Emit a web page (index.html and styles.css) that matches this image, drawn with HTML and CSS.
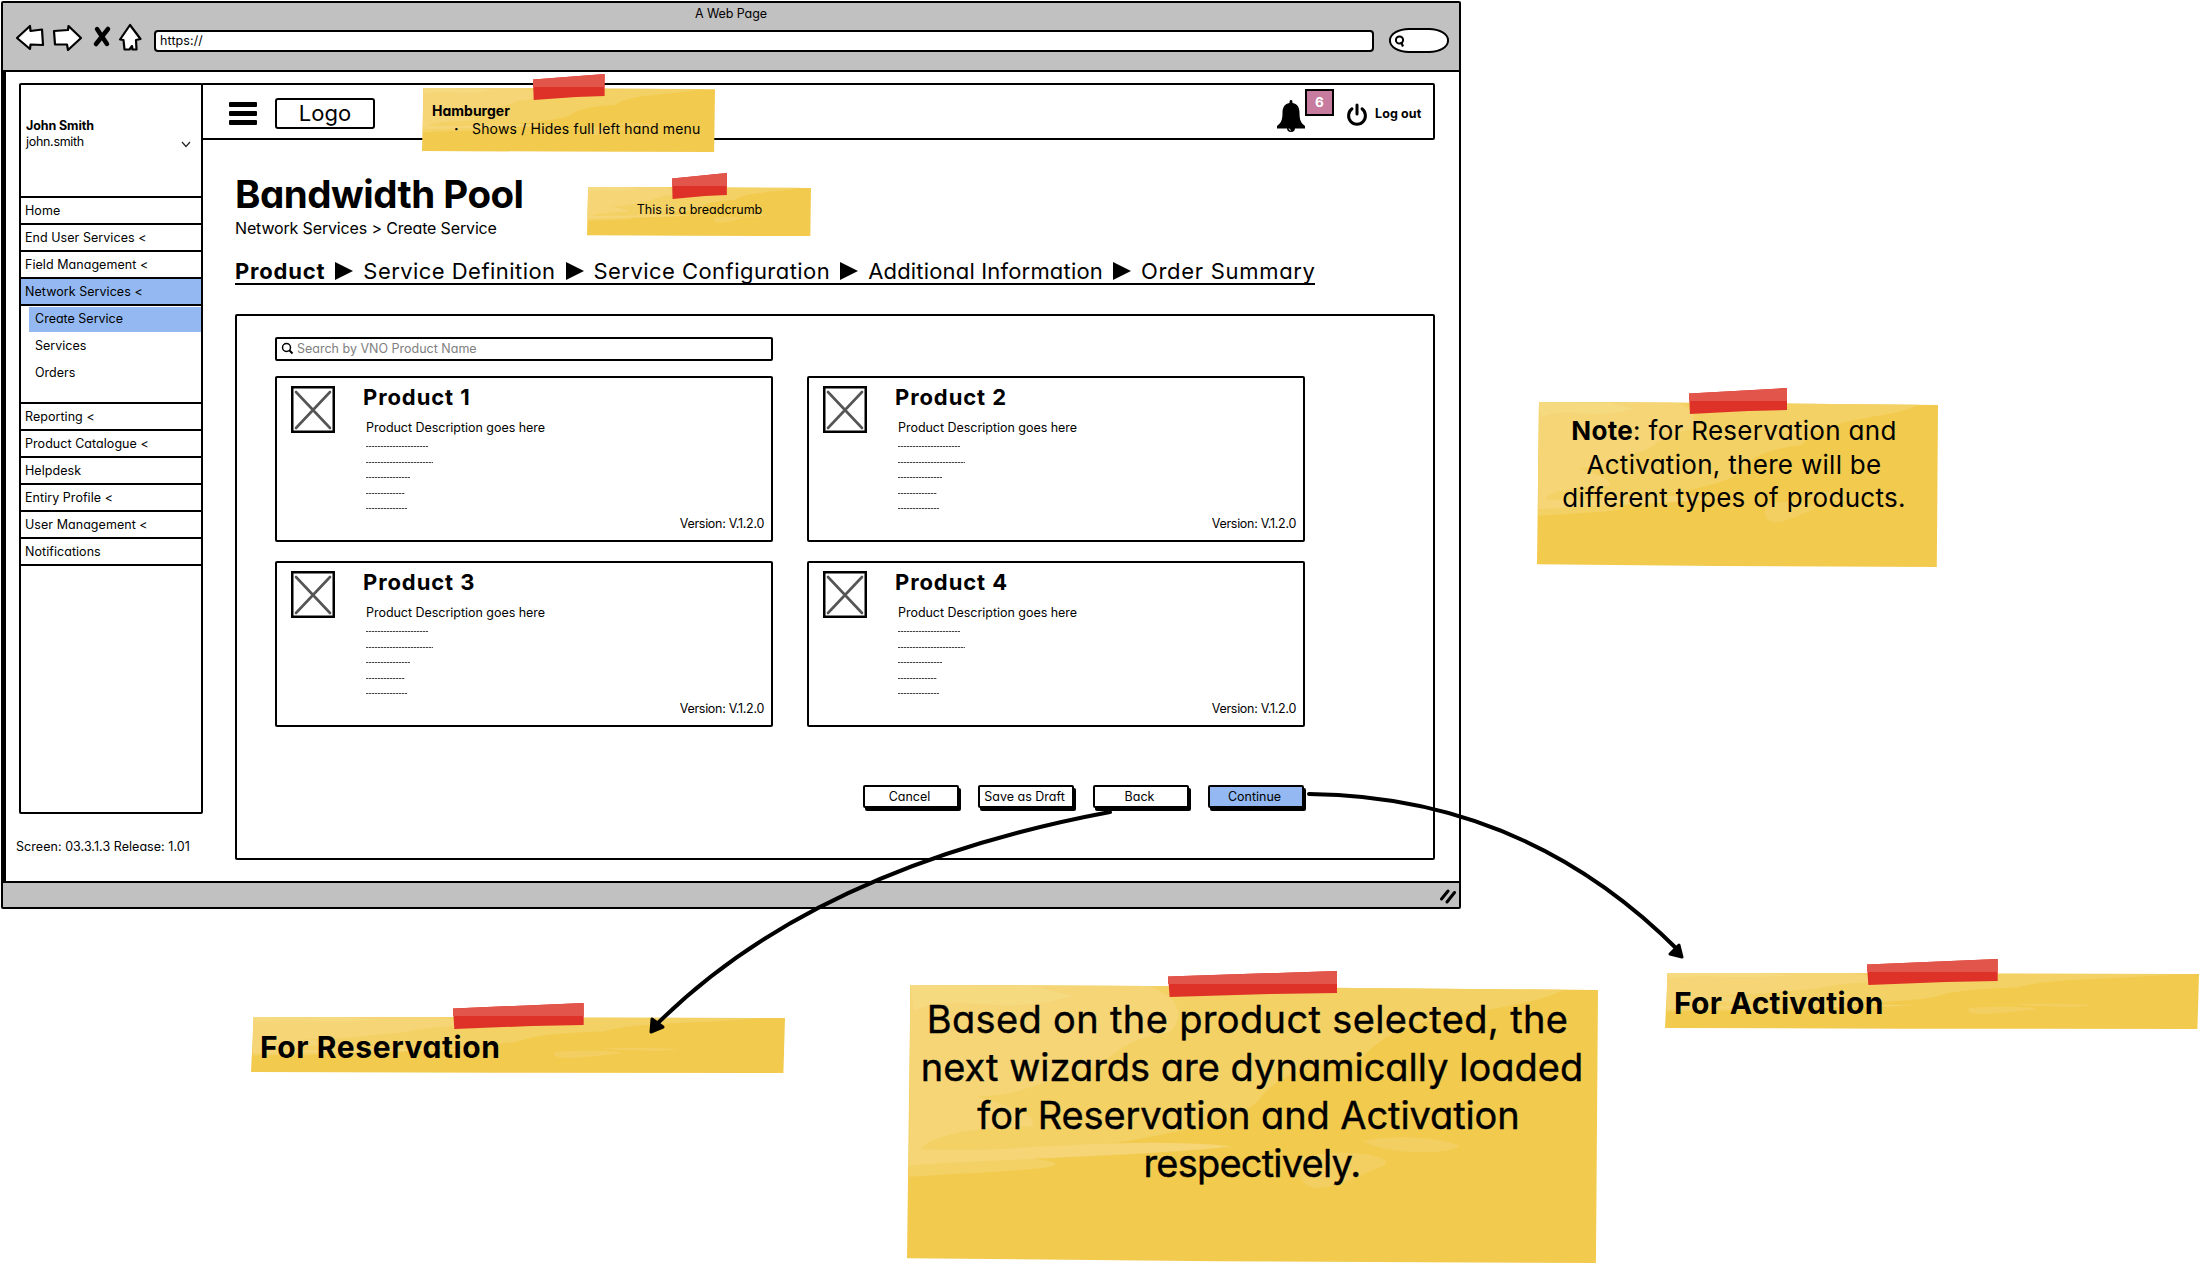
FILE: index.html
```html
<!DOCTYPE html>
<html lang="en">
<head>
    <meta charset="UTF-8">
    <title>A Web Page</title>
    <link rel="stylesheet" href="styles.css">
</head>
<body>

<!-- shared shapes -->
<svg class="defs" width="0" height="0">
    <symbol id="note" viewBox="0 0 100 100" preserveAspectRatio="none">
        <path d="M.5 0 L35 .4 L100 1.8 L99.700 100 L45 99.400 L0 98.300 Z" fill="#f2ca4d"/>
        <path d="M.5 0 L35 .4 L95 1.700 C92 6 86 8 79 11 C71 15 68 20 66 26 C56 29 53 35 51 41 C48 51 32 56 17 62 C30 66 12 67 .3 69 Z" fill="#f3d165"/>
        <path d="M.5 0 L35 .4 C40 5 40 12 38 17 C30 20 31 26 26 30 C18 36 16 40 10 40 C17 45 19 48 18 51 C8 51 3 55 2 59 C14 61 30 54 47 58 C38 61 10 63 .3 65 Z" fill="#f5d576"/>
        <path d="M1 9 C8 2 13 12 24 4 L18 .3 L.5 0 Z" fill="#f6da80"/>
        <path d="M57 62 C64 58 71 62 69 65 C65 69 62 73 59 73 C56 71 57 66 57 62 Z M66 56 C72 53 79 56 80 58 C77 62 68 60 66 56 Z" fill="#f3cf62"/>
    </symbol>
    <symbol id="tape" viewBox="0 0 100 26" preserveAspectRatio="none">
        <path d="M0 5.500 L100 0 V22 L60 23 L1 26 Z" fill="#de3127"/>
        <path d="M0 5.500 L100 0 V13 H0 Z" fill="#e1554a"/>
    </symbol>
    <symbol id="thumb" viewBox="0 0 44 48">
        <rect x="1.250" y="1.250" width="41.500" height="44.500" fill="#fff" stroke="#000" stroke-width="2.500"/>
        <path d="M5 6 L39 42 M39 6 L5 42" stroke="#555" stroke-width="2.600" stroke-linecap="round"/>
    </symbol>
</svg>

<div class="browser">
    <div class="chrome">
        <div class="title">A Web Page</div>
        <div class="toolbar">
            <svg class="nav" width="128" height="30" viewBox="0 0 128 30">
                <g fill="#fff" stroke="#000" stroke-width="2.2" stroke-linejoin="round">
                    <path d="M2 15 L15 3 L15.500 8 L27 6.500 L28 22 L15.500 21.500 L15 26 Z"/>
                    <path d="M39 8 L53 7 L53.500 3 L66 15 L53 27 L52 21.500 L40 21.500 Z"/>
                    <path d="M115 2 L125.500 16 L121 17 L121.500 26.500 H117.500 L117 23 L114.500 26.500 H109.500 L108.500 17 L105 16.500 Z"/>
                </g>
                <path d="M82 6 L92 21 M93 6 L81 21" stroke="#000" stroke-width="4.500" stroke-linecap="round"/>
            </svg>
            <div class="url">https://</div>
            <div class="oval">
                <svg width="12" height="13" viewBox="0 0 12 13"><circle cx="5.500" cy="5" r="3.600" fill="none" stroke="#000" stroke-width="2"/><path d="M7 7 L9 11.500" stroke="#000" stroke-width="2.200"/></svg>
            </div>
        </div>
    </div>

    <div class="page">
        <div class="left">
            <div class="sidebar">
                <div class="user">
                    <b>John Smith</b>
                    <span>john.smith</span>
                    <svg class="chevron" width="10" height="7" viewBox="0 0 10 7"><path d="M1 1 L5 5.500 L9 1" fill="none" stroke="#222" stroke-width="1.200"/></svg>
                </div>
                <ul class="menu">
                    <li>Home</li>
                    <li>End User Services &lt;</li>
                    <li>Field Management &lt;</li>
                    <li class="current">Network Services &lt;</li>
                </ul>
                <ul class="submenu">
                    <li class="current">Create Service</li>
                    <li>Services</li>
                    <li>Orders</li>
                </ul>
                <ul class="menu last">
                    <li>Reporting &lt;</li>
                    <li>Product Catalogue &lt;</li>
                    <li>Helpdesk</li>
                    <li>Entiry Profile &lt;</li>
                    <li>User Management &lt;</li>
                    <li>Notifications</li>
                </ul>
            </div>
            <div class="release">Screen: 03.3.1.3 Release: 1.01</div>
        </div>

        <div class="main">
            <div class="topbar">
                <div class="burger"><i></i><i></i><i></i></div>
                <div class="logo">Logo</div>
                <div class="bell">
                    <svg width="30" height="33" viewBox="0 0 30 33"><path d="M15 0 C16.500 0 16.500 1.500 16.500 3 C22 4 23.500 8 23.500 13 C23.500 20 25 23 29 26 V28.500 H1 V26 C5 23 6.500 20 6.500 13 C6.500 8 8 4 13.500 3 C13.500 1.500 13.500 0 15 0 Z"/><path d="M11 28 a4 4 0 0 0 8 0 Z"/><path d="M13 28.500 a2 2 0 0 0 2 1.800" fill="none" stroke="#fff" stroke-width=".9"/></svg>
                    <span class="badge">6</span>
                </div>
                <svg class="power" width="22" height="24" viewBox="0 0 22 24"><path d="M6 5.800 A8.400 8.600 0 1 0 16 5.800" fill="none" stroke="#000" stroke-width="3" stroke-linecap="round"/><path d="M11 2 V11" stroke="#000" stroke-width="3" stroke-linecap="round"/></svg>
                <b class="logout">Log out</b>
            </div>

            <h1>Bandwidth Pool</h1>
            <div class="crumbs">Network Services &gt; Create Service</div>

            <div class="steps">
                <b>Product</b><i></i>
                <span>Service Definition</span><i></i>
                <span>Service Configuration</span><i></i>
                <span class="tight">Additional Information</span><i></i>
                <span class="loose">Order Summary</span>
            </div>

            <div class="panel">
                <div class="search">
                    <svg width="13" height="13" viewBox="0 0 13 13"><circle cx="5.500" cy="5.500" r="4" fill="none" stroke="#000" stroke-width="1.500"/><path d="M8.300 8.300 L11.500 11.500" stroke="#000" stroke-width="2"/></svg>
                    <span>Search by VNO Product Name</span>
                </div>
                <div class="products">
                    <div class="card">
                        <svg class="thumb" width="44" height="48"><use href="#thumb"/></svg>
                        <div class="info">
                            <h2>Product 1</h2>
                            <p>Product Description goes here</p>
                            <div class="dots"><i class="d1"></i><i class="d2"></i><i class="d3"></i><i class="d4"></i><i class="d5"></i></div>
                        </div>
                        <span class="version">Version: V.1.2.0</span>
                    </div>
                    <div class="card">
                        <svg class="thumb" width="44" height="48"><use href="#thumb"/></svg>
                        <div class="info">
                            <h2>Product 2</h2>
                            <p>Product Description goes here</p>
                            <div class="dots"><i class="d1"></i><i class="d2"></i><i class="d3"></i><i class="d4"></i><i class="d5"></i></div>
                        </div>
                        <span class="version">Version: V.1.2.0</span>
                    </div>
                    <div class="card">
                        <svg class="thumb" width="44" height="48"><use href="#thumb"/></svg>
                        <div class="info">
                            <h2>Product 3</h2>
                            <p>Product Description goes here</p>
                            <div class="dots"><i class="d1"></i><i class="d2"></i><i class="d3"></i><i class="d4"></i><i class="d5"></i></div>
                        </div>
                        <span class="version">Version: V.1.2.0</span>
                    </div>
                    <div class="card">
                        <svg class="thumb" width="44" height="48"><use href="#thumb"/></svg>
                        <div class="info">
                            <h2>Product 4</h2>
                            <p>Product Description goes here</p>
                            <div class="dots"><i class="d1"></i><i class="d2"></i><i class="d3"></i><i class="d4"></i><i class="d5"></i></div>
                        </div>
                        <span class="version">Version: V.1.2.0</span>
                    </div>
                </div>
                <div class="buttons">
                    <div class="btn">Cancel</div>
                    <div class="btn">Save as Draft</div>
                    <div class="btn">Back</div>
                    <div class="btn primary">Continue</div>
                </div>
            </div>
        </div>
    </div>

    <div class="footer">
        <svg width="18" height="16" viewBox="0 0 18 16"><path d="M2.500 11 L9 3 M8 14 L15.500 4.500" stroke="#000" stroke-width="3" stroke-linecap="round"/></svg>
    </div>
</div>

<!-- sticky notes -->
<div class="note hamburger">
    <svg class="paper"><use href="#note"/></svg>
    <svg class="tape"><use href="#tape"/></svg>
    <p><b>Hamburger</b></p>
    <p class="item"><span>&middot;</span>Shows / Hides full left hand menu</p>
</div>
<div class="note breadcrumb">
    <svg class="paper"><use href="#note"/></svg>
    <svg class="tape"><use href="#tape"/></svg>
    <p>This is a breadcrumb</p>
</div>
<div class="note types">
    <svg class="paper"><use href="#note"/></svg>
    <svg class="tape"><use href="#tape"/></svg>
    <p><b>Note</b>: for Reservation and<br>Activation, there will be<br>different types of products.</p>
</div>
<div class="note wizards">
    <svg class="paper"><use href="#note"/></svg>
    <svg class="tape"><use href="#tape"/></svg>
    <p><span class="first">Based on the product selected, the</span><br>next wizards are dynamically loaded<br><span class="mid">for Reservation and Activation</span><br><span class="end">respectively.</span></p>
</div>
<div class="note reservation">
    <svg class="paper"><use href="#note"/></svg>
    <svg class="tape"><use href="#tape"/></svg>
    <p><b>For Reservation</b></p>
</div>
<div class="note activation">
    <svg class="paper"><use href="#note"/></svg>
    <svg class="tape"><use href="#tape"/></svg>
    <p><b>For Activation</b></p>
</div>

<!-- arrows from the buttons to the notes -->
<svg class="arrows" width="2200" height="1264" viewBox="0 0 2200 1264">
    <g fill="none" stroke="#000" stroke-width="4" stroke-linecap="round">
        <path d="M1110 812 Q812 868 655 1026"/>
        <path d="M1309 794 Q1525 796 1679 951"/>
    </g>
    <g stroke="#000" stroke-width="3" stroke-linejoin="round">
        <path d="M651 1032 L652 1019 L663 1027 Z"/>
        <path d="M1682 957 L1670 954 L1679 945 Z"/>
    </g>
</svg>

</body>
</html>
```
FILE: styles.css
```css
* {
    margin: 0;
    padding: 0;
    box-sizing: border-box;
    list-style: none;
}

body {
    position: relative;
    width: 2200px;
    height: 1264px;
    overflow: hidden;
    background: #fff;
    color: #000;
    font-family: Inter, "Open Sans", sans-serif;
    font-feature-settings: "cv11";
    font-size: 12.5px;
    line-height: 16px;
    white-space: nowrap;
}

svg {
    display: block;
}

.defs {
    position: absolute;
}

/* browser window */

.browser {
    width: 1460px;
    height: 908px;
    margin-left: 1px;
    border: 2px solid #000;
    border-radius: 2px;
    position: relative;
    top: 1px;
}

.chrome {
    height: 69px;
    background: #c1c1c1;
    border-bottom: 2px solid #000;
}

.title {
    height: 20px;
    padding-top: 3px;
    text-align: center;
    letter-spacing: -0.1px;
}

.toolbar {
    display: flex;
    align-items: flex-start;
    padding-left: 12px;
}

.url {
    width: 1220px;
    height: 22px;
    margin: 7px 0 0 11px;
    padding-left: 4px;
    line-height: 17px;
    background: #fff;
    border: 2px solid #000;
    border-radius: 4px;
    letter-spacing: 0.1px;
}

.oval {
    width: 60px;
    height: 25px;
    margin: 5px 0 0 15px;
    padding: 5px 0 0 3px;
    background: #fff;
    border: 2px solid #000;
    border-radius: 20px / 12px;
}

.page {
    display: flex;
    height: 809px;
    padding: 11px 0 0 13px;
    border-left: 3px solid #000;
}

.footer {
    display: flex;
    justify-content: flex-end;
    height: 26px;
    padding: 5px 2px 0 0;
    background: #c1c1c1;
    border-top: 2px solid #000;
}

/* left side */

.left {
    width: 184px;
}

.sidebar {
    height: 731px;
    border: 2px solid #000;
    border-radius: 2px;
}

.user {
    position: relative;
    height: 111px;
    padding: 33px 0 0 5px;
}

.user b,
.user span {
    display: block;
    letter-spacing: -0.1px;
}

.user span {
    letter-spacing: -0.3px;
}

.chevron {
    position: absolute;
    right: 10px;
    bottom: 48px;
}

.menu li {
    height: 27px;
    padding-left: 4px;
    line-height: 26px;
    letter-spacing: 0.05px;
    border-top: 2px solid #000;
}

.menu .current,
.submenu .current {
    background: #94b9f2;
}

.submenu {
    height: 98px;
    padding: 1px 0 0 8px;
    border-top: 2px solid #000;
}

.submenu li {
    height: 25px;
    margin-bottom: 2px;
    padding-left: 6px;
    line-height: 24px;
}

.last {
    border-bottom: 2px solid #000;
}

.release {
    margin: 25px 0 0 -3px;
    letter-spacing: 0.05px;
}

/* right side */

.main {
    width: 1234px;
    margin-left: -2px;
}

.topbar {
    display: flex;
    height: 57px;
    border: 2px solid #000;
    border-radius: 2px;
}

.burger {
    width: 28px;
    margin: 17px 0 0 26px;
}

.burger i {
    display: block;
    height: 5px;
    margin-bottom: 4px;
    background: #000;
    border-radius: 1px;
}

.logo {
    width: 100px;
    height: 31px;
    margin: 13px 0 0 18px;
    line-height: 27px;
    font-size: 22px;
    text-align: center;
    border: 2px solid #000;
    border-radius: 3px;
}

.bell {
    position: relative;
    width: 30px;
    margin: 15px 0 0 auto;
}

.badge {
    position: absolute;
    left: 29px;
    top: -11px;
    width: 29px;
    height: 27px;
    line-height: 23px;
    text-align: center;
    font-size: 13.5px;
    font-weight: bold;
    color: #fff;
    background: #c77b9f;
    border: 2px solid #000;
}

.power {
    margin: 18px 7px 0 40px;
}

.logout {
    width: 58px;
    margin-top: 21px;
    letter-spacing: 0.1px;
}

h1 {
    margin: 30px 0 0 34px;
    line-height: 48px;
    font-size: 38.5px;
    letter-spacing: -0.5px;
}

.crumbs {
    margin: 0 0 0 34px;
    line-height: 20px;
    font-size: 16px;
    letter-spacing: -0.15px;
}

.steps {
    display: flex;
    align-items: center;
    width: 1080px;
    height: 26px;
    margin: 21px 0 0 34px;
    font-size: 22px;
    letter-spacing: 0.45px;
    border-bottom: 2px solid #000;
}

.steps b {
    letter-spacing: 0.8px;
}

.steps .tight {
    letter-spacing: 0.18px;
}

.steps .loose {
    letter-spacing: 0.7px;
}

.steps i {
    margin: 0 10px;
    border-left: 18px solid #000;
    border-top: 9px solid transparent;
    border-bottom: 9px solid transparent;
}

.panel {
    width: 1200px;
    height: 546px;
    margin: 29px 0 0 34px;
    padding: 21px 0 0 38px;
    border: 2px solid #000;
    border-radius: 2px;
}

.search {
    display: flex;
    align-items: center;
    width: 498px;
    height: 24px;
    padding: 0 0 1px 4px;
    color: #808080;
    border: 2px solid #000;
    border-radius: 2px;
}

.search span {
    margin-left: 3px;
}

.products {
    display: grid;
    grid-template-columns: 498px 498px;
    gap: 19px 34px;
    margin-top: 15px;
}

.card {
    display: flex;
    position: relative;
    height: 166px;
    padding: 8px 0 0 14px;
    border: 2px solid #000;
    border-radius: 2px;
}

.info {
    margin-left: 28px;
}

h2 {
    line-height: 22px;
    font-size: 22px;
    letter-spacing: 0.9px;
}

.info p {
    margin: 12px 0 0 3px;
    letter-spacing: -0.03px;
}

.dots {
    margin-left: 3px;
    padding-top: 10px;
}

.dots i {
    display: block;
    height: 1px;
    margin-bottom: 14.5px;
    background: repeating-linear-gradient(90deg, #444 0, #444 2px, #bbb 2px, #bbb 3px);
}

.d1 { width: 62px; }
.d2 { width: 67px; }
.d3 { width: 44px; }
.d4 { width: 39px; }
.d5 { width: 41px; }

.version {
    position: absolute;
    right: 7px;
    bottom: 8px;
    letter-spacing: -0.3px;
}

.buttons {
    display: flex;
    gap: 19px;
    margin: 58px 0 0 588px;
}

.btn {
    width: 96px;
    height: 23px;
    padding-right: 3px;
    line-height: 20px;
    text-align: center;
    background: #fff;
    border: 2px solid #000;
    border-radius: 2px;
    box-shadow: 2px 3px 0 #000;
}

.primary {
    background: #94b9f2;
}

/* sticky notes */

.note {
    position: absolute;
}

.paper {
    position: absolute;
    left: 0;
    top: 0;
    width: 100%;
    height: 100%;
}

.tape {
    position: absolute;
    left: 37.8%;
    top: -14px;
    width: 24.5%;
    height: 26px;
}

.note p {
    position: relative;
}

.hamburger {
    left: 422px;
    top: 88px;
    width: 293px;
    height: 64px;
    padding: 14px 0 0 10px;
    font-size: 14px;
    line-height: 18px;
}

.item {
    letter-spacing: 0.18px;
}

.item span {
    display: inline-block;
    width: 18px;
    margin-left: 22px;
    font-weight: bold;
}

.breadcrumb {
    left: 587px;
    top: 187px;
    width: 224px;
    height: 49px;
    padding: 15px 0 0 1px;
    text-align: center;
}

.types {
    left: 1537px;
    top: 402px;
    width: 401px;
    height: 165px;
    padding: 12px 7px 0 0;
    font-size: 26px;
    line-height: 33.7px;
    letter-spacing: 0.3px;
    text-align: center;
}

.wizards {
    left: 907px;
    top: 985px;
    width: 691px;
    height: 278px;
    padding: 10px 1px 0 0;
    font-size: 38px;
    line-height: 48px;
    letter-spacing: 0;
    text-align: center;
    -webkit-text-stroke: 0.4px #000;
}

.wizards .first {
    margin-right: 9px;
    letter-spacing: 0.35px;
}

.wizards .mid {
    margin-right: 7px;
    letter-spacing: -0.1px;
}

.wizards .end {
    letter-spacing: -0.8px;
}

.reservation,
.activation {
    width: 534px;
    height: 56px;
    padding: 10px 0 0 9px;
    font-size: 30px;
    line-height: 40px;
}

.reservation {
    left: 251px;
    top: 1017px;
    letter-spacing: 0.6px;
}

.activation {
    left: 1665px;
    top: 973px;
    letter-spacing: 0.3px;
}

.arrows {
    position: absolute;
    left: 0;
    top: 0;
}
```
